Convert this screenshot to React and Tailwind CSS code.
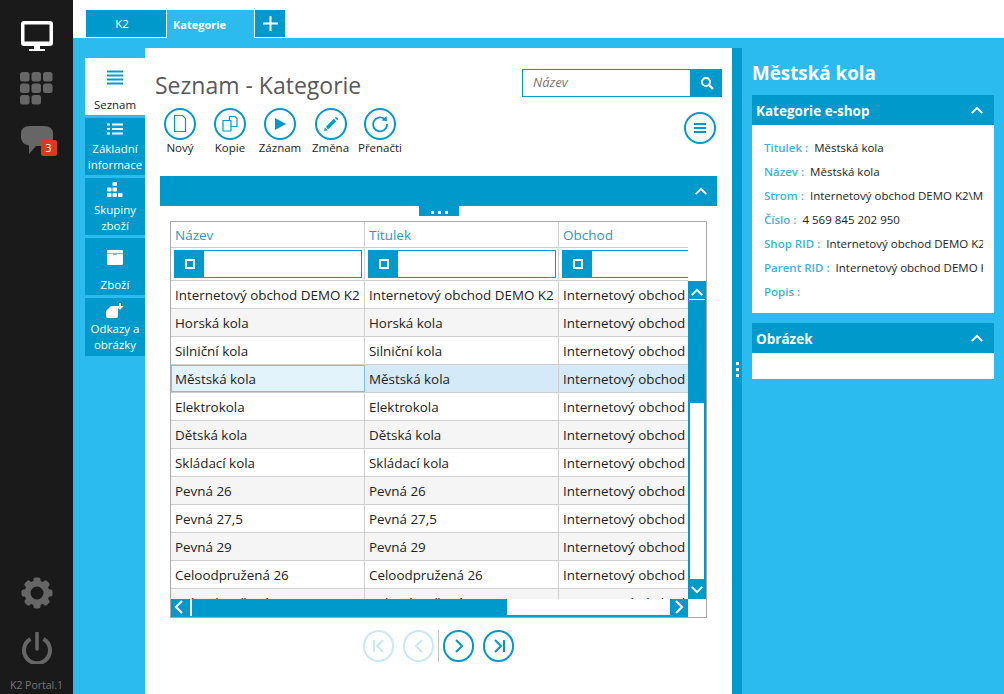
import React from 'react';

const rows = [
  'Internetový obchod DEMO K2',
  'Horská kola',
  'Silniční kola',
  'Městská kola',
  'Elektrokola',
  'Dětská kola',
  'Skládací kola',
  'Pevná 26',
  'Pevná 27,5',
  'Pevná 29',
  'Celoodpružená 26',
  'Celoodpružená 27,5',
];

const details = [
  ['Titulek', 'Městská kola'],
  ['Název', 'Městská kola'],
  ['Strom', 'Internetový obchod DEMO K2\\Městská kola'],
  ['Číslo', '4 569 845 202 950'],
  ['Shop RID', 'Internetový obchod DEMO K2'],
  ['Parent RID', 'Internetový obchod DEMO K2'],
  ['Popis', ''],
];

function Chevron({ dir = 'up', className = '' }) {
  const d = { up: 'M2 9 L8 3 L14 9', down: 'M2 3 L8 9 L14 3' }[dir];
  return (
    <svg width="14" height="11" viewBox="0 0 16 12" className={className}>
      <path d={d} fill="none" stroke="white" strokeWidth="2.4" />
    </svg>
  );
}

function Monitor() {
  return (
    <svg width="34" height="32" viewBox="0 0 34 32">
      <path fillRule="evenodd" fill="white" d="M4 1 H30 Q33 1 33 4 V23 Q33 26 30 26 H4 Q1 26 1 23 V4 Q1 1 4 1 Z M4.500 4.500 V21.500 H29.500 V4.500 Z" />
      <rect x="14" y="26" width="6" height="3" fill="white" />
      <rect x="9" y="29" width="16" height="2" fill="white" />
    </svg>
  );
}

function Apps() {
  const cells = [[0, 0], [11.500, 0], [23, 0], [0, 11.500], [11.500, 11.500], [23, 11.500], [0, 23], [11.500, 23]];
  return (
    <svg width="33" height="33" viewBox="0 0 33 33">
      {cells.map(([x, y]) => (
        <rect key={`${x}-${y}`} x={x} y={y} width="9.500" height="9.500" rx="2.500" fill="#666" />
      ))}
    </svg>
  );
}

function Chat() {
  return (
    <svg width="32" height="29" viewBox="0 0 32 29">
      <path fill="#666" d="M9 0 H23 Q32 0 32 8 V12 Q32 20 23 20 H15 L8 28 V19.500 Q0 18 0 11 V8 Q0 0 9 0 Z" />
    </svg>
  );
}

function Gear() {
  const teeth = [0, 45, 90, 135, 180, 225, 270, 315];
  return (
    <svg width="32" height="32" viewBox="0 0 32 32">
      {teeth.map((a) => (
        <rect key={a} x="12.500" y="0.500" width="7" height="8" rx="2" fill="#666" transform={`rotate(${a} 16 16)`} />
      ))}
      <circle cx="16" cy="16" r="9.500" fill="none" stroke="#666" strokeWidth="6" />
    </svg>
  );
}

function Power() {
  return (
    <svg width="32" height="32" viewBox="0 0 32 32">
      <path d="M9.500 7 A13 13 0 1 0 22.500 7" fill="none" stroke="#666" strokeWidth="4" />
      <path d="M16 1 V17" stroke="#666" strokeWidth="3.500" strokeLinecap="round" />
    </svg>
  );
}

const toolIcons = {
  new: <path d="M4.500 1.500 H12.500 L15.500 4.500 V17.500 H4.500 Z" fill="none" stroke="#0099cc" strokeWidth="1.200" />,
  copy: (
    <g fill="none" stroke="#0099cc" strokeWidth="1.200">
      <path d="M9.500 2.500 H15 L17 4.500 V12.500 H9.500 Z" />
      <path d="M3 6.500 H11 V17 H3 Z" fill="white" />
    </g>
  ),
  play: <path d="M5 4 L16 10 L5 16 Z" fill="#0099cc" />,
  edit: (
    <g>
      <path d="M6 14 L14 6" stroke="#0099cc" strokeWidth="3.200" />
      <path d="M15 5 L16.200 3.800" stroke="#0099cc" strokeWidth="3.200" />
      <path d="M3 17 L3.800 13.500 L6.500 16.200 Z" fill="#0099cc" />
    </g>
  ),
  reload: (
    <g>
      <path d="M14.500 5 A7 7 0 1 0 17 10" fill="none" stroke="#0099cc" strokeWidth="1.800" />
      <path d="M11.500 6.500 L17 7 L16.500 2 Z" fill="#0099cc" />
    </g>
  ),
};

function ToolButton({ icon, label, width }) {
  return (
    <div className="flex flex-col items-center" style={{ width }}>
      <div className="w-[32px] h-[32px] rounded-full border-2 border-[#0099cc] flex items-center justify-center">
        <svg width="20" height="20" viewBox="0 0 20 20">{toolIcons[icon]}</svg>
      </div>
      <div className="text-[11.500px] leading-[16px] text-[#222] whitespace-nowrap">{label}</div>
    </div>
  );
}

function PagerButton({ d, faded }) {
  return (
    <div className={`w-[31px] h-[32px] rounded-full border-2 flex items-center justify-center ${faded ? 'border-[#c9e9f4]' : 'border-[#0099cc]'}`}>
      <svg width="18" height="18" viewBox="0 0 18 18">
        <path d={d} fill="none" stroke={faded ? '#c9e9f4' : '#0099cc'} strokeWidth="2" />
      </svg>
    </div>
  );
}

function NavItem({ label, icon, active, iconClass }) {
  return (
    <div className={`flex flex-col items-center text-center text-[11.500px] leading-[16px] ${active ? 'bg-white text-[#222] h-[57px]' : 'bg-[#0099cc] text-white h-[57px]'}`}>
      <div className={`flex items-center justify-center shrink-0 ${iconClass}`}>{icon}</div>
      {label.map((line) => (
        <div key={line} className="whitespace-nowrap">{line}</div>
      ))}
    </div>
  );
}

function FilterCell({ width }) {
  return (
    <div className="h-[32px] flex items-center pl-[3px] pr-[2px] border-r border-[#d0d0d0]" style={{ width }}>
      <div className="h-[28px] w-full flex border border-[#0099cc] bg-white">
        <div className="w-[29px] h-full bg-[#0099cc] flex items-center justify-center">
          <div className="w-[10px] h-[10px] border-2 border-white" />
        </div>
      </div>
    </div>
  );
}

function PanelHeader({ title }) {
  return (
    <div className="h-[30px] bg-[#0099cc] flex items-center justify-between pl-[4px] pr-[10px] text-white font-bold text-[13.500px]">
      <span className="pt-[2px]">{title}</span>
      <Chevron />
    </div>
  );
}

export default function App() {
  return (
    <div className="w-[1004px] h-[694px] flex overflow-hidden bg-white text-[#222]" style={{ fontFamily: '"Open Sans", "Noto Sans", sans-serif' }}>
      {/* dark sidebar */}
      <div className="w-[73px] shrink-0 bg-[#1a1a1a] flex flex-col items-center">
        <div className="mt-[20px]"><Monitor /></div>
        <div className="mt-[20px]"><Apps /></div>
        <div className="mt-[21px] relative">
          <Chat />
          <div className="absolute left-[20px] top-[14px] w-[16px] h-[16px] rounded-[2px] bg-[#d9391c] text-white text-[11px] leading-[16px] text-center">3</div>
        </div>
        <div className="mt-auto"><Gear /></div>
        <div className="mt-[23px]"><Power /></div>
        <div className="mt-[14px] mb-[2px] text-[10.500px] leading-[14px] text-[#777] whitespace-nowrap">K2 Portal.1</div>
      </div>

      <div className="flex-1 flex flex-col min-w-0">
        {/* tabs */}
        <div className="h-[38px] shrink-0 flex pl-[13px] pt-[10px] gap-[1px] bg-white">
          <div className="w-[80px] h-[27px] bg-[#0099cc] text-white text-[11.500px] leading-[27px] text-center pr-[8px]">K2</div>
          <div className="w-[87px] h-[28px] bg-[#2bbbef] text-white font-bold text-[11px] leading-[30px] pl-[6px]">Kategorie</div>
          <div className="w-[30px] h-[27px] bg-[#0099cc] flex items-center justify-center">
            <svg width="15" height="15" viewBox="0 0 15 15">
              <path d="M7.500 0 V15 M0 7.500 H15" stroke="white" strokeWidth="2" />
            </svg>
          </div>
        </div>

        <div className="flex-1 flex bg-[#2bbbef] min-h-0">
          {/* section nav */}
          <div className="w-[72px] shrink-0 pl-[12px] pt-[20px] flex flex-col gap-[3px]">
            <NavItem active iconClass="mt-[12px] mb-[11px]" label={['Seznam']} icon={
              <svg width="16" height="16" viewBox="0 0 16 16"><path d="M0 1.500 H16 M0 5.500 H16 M0 9.500 H16 M0 13.500 H16" stroke="#0099cc" strokeWidth="2" /></svg>
            } />
            <NavItem iconClass="mt-[5px] mb-[6px]" label={['Základní', 'informace']} icon={
              <svg width="16" height="12" viewBox="0 0 16 12"><path d="M0 1.500 H3 M5 1.500 H16 M0 6 H3 M5 6 H16 M0 10.500 H3 M5 10.500 H16" stroke="white" strokeWidth="2" /></svg>
            } />
            <NavItem iconClass="mt-[4px] mb-[5px]" label={['Skupiny', 'zboží']} icon={
              <svg width="16" height="15" viewBox="0 0 16 15" fill="white"><rect x="5.500" y="0" width="4.500" height="4" rx="1" /><rect x="0" y="5.500" width="4.500" height="4" rx="1" /><rect x="5.500" y="5.500" width="4.500" height="4" rx="1" /><rect x="0" y="11" width="4.500" height="4" rx="1" /><rect x="5.500" y="11" width="4.500" height="4" rx="1" /><rect x="11" y="11" width="4.500" height="4" rx="1" /></svg>
            } />
            <div className="h-[57px] bg-[#0099cc] text-white text-[11.500px] leading-[16px] flex flex-col items-center">
              <svg width="16" height="15" viewBox="0 0 16 15" className="mt-[12px]" fill="white">
                <rect x="0" y="0" width="16" height="15" rx="1" />
                <path d="M0 3.500 H16" stroke="#66c2e0" strokeWidth="1" />
                <rect x="6" y="3" width="4" height="2" fill="#66c2e0" />
              </svg>
              <div className="mt-[12px]">Zboží</div>
            </div>
            <div className="h-[58px] bg-[#0099cc] text-white text-[11.500px] leading-[16px] flex flex-col items-center text-center">
              <svg width="18" height="16" viewBox="0 0 18 16" className="mt-[5px]" fill="white"><path d="M5 3 H11 Q12 3 12 5 V13 Q12 15 10 15 H2 Q0 15 0 13 V8 Z" /><path d="M13 0 H15 V3 H17.500 L14 7 L10.500 3 H13 Z" /></svg>
              <div className="mt-[2px]">Odkazy a</div>
              <div>obrázky</div>
            </div>
          </div>

          {/* main panel */}
          <div className="w-[587px] shrink-0 mt-[10px] bg-white flex flex-col pl-[10px] pr-[10px]">
            <div className="flex justify-between items-start pt-[21px] h-[60px] shrink-0">
              <div className="text-[23px] leading-[32px] text-[#58595b]">Seznam - Kategorie</div>
              <div className="flex w-[200px] h-[28px]">
                <div className="flex-1 border border-[#0099cc] pl-[10px] text-[13px] leading-[25px] italic text-[#777]">Název</div>
                <div className="w-[31px] bg-[#0099cc] flex items-center justify-center">
                  <svg width="14" height="14" viewBox="0 0 14 14"><circle cx="6" cy="6" r="4" fill="none" stroke="white" strokeWidth="2" /><path d="M9 9 L13 13" stroke="white" strokeWidth="2.400" /></svg>
                </div>
              </div>
            </div>

            <div className="flex items-start justify-between shrink-0 h-[68px] pr-[6px]">
              <div className="flex pl-[5px]">
                <ToolButton icon="new" label="Nový" width={40} />
                <ToolButton icon="copy" label="Kopie" width={60} />
                <ToolButton icon="play" label="Záznam" width={40} />
                <ToolButton icon="edit" label="Změna" width={61} />
                <ToolButton icon="reload" label="Přenačti" width={38} />
              </div>
              <div className="mt-[4px] w-[32px] h-[32px] rounded-full border-2 border-[#0099cc] flex items-center justify-center">
                <svg width="14" height="12" viewBox="0 0 14 12"><path d="M1 2 H13 M1 6 H13 M1 10 H13" stroke="#0099cc" strokeWidth="2" /></svg>
              </div>
            </div>

            <div className="ml-[5px] w-[557px] h-[30px] shrink-0 bg-[#0099cc] flex items-center justify-end pr-[9px]">
              <Chevron />
            </div>
            <div className="ml-[264px] w-[40px] h-[10px] shrink-0 bg-[#0099cc] flex items-center justify-center gap-[4px] pt-[2px]">
              <span className="w-[3px] h-[3px] bg-white" /><span className="w-[3px] h-[3px] bg-white" /><span className="w-[3px] h-[3px] bg-white" />
            </div>

            {/* grid */}
            <div className="mt-[5px] ml-[15px] w-[537px] h-[397px] shrink-0 border border-[#aaa] flex flex-col text-[13.400px] overflow-hidden">
              <div className="w-[517px] h-[26px] flex text-[#2d96c6] text-[13.500px] leading-[26px] border-b border-[#d0d0d0] shrink-0">
                <div className="w-[194px] pl-[4px] border-r border-[#d0d0d0]">Název</div>
                <div className="w-[194px] pl-[4px] border-r border-[#d0d0d0]">Titulek</div>
                <div className="w-[129px] pl-[4px]">Obchod</div>
              </div>
              <div className="w-[517px] flex border-b border-[#d0d0d0] shrink-0">
                <FilterCell width={194} />
                <FilterCell width={194} />
                <div className="w-[129px] h-[32px] flex items-center pl-[3px]">
                  <div className="h-[28px] w-full flex border border-r-0 border-[#0099cc]">
                    <div className="w-[29px] h-full bg-[#0099cc] flex items-center justify-center">
                      <div className="w-[10px] h-[10px] border-2 border-white" />
                    </div>
                  </div>
                </div>
              </div>

              <div className="flex-1 flex min-h-0">
                <div className="w-[517px] overflow-hidden">
                  {rows.map((name, i) => {
                    const selected = i === 3;
                    const bg = selected ? 'bg-[#d4eaf8]' : i % 2 === 1 ? 'bg-[#f5f5f5]' : 'bg-white';
                    return (
                      <div key={name} className={`h-[28px] flex leading-[29px] border-b border-[#d0d0d0] text-[#222] whitespace-nowrap ${bg}`}>
                        {selected ? (
                          <div className="w-[194px] pl-[3px] overflow-hidden bg-[#e3f3fc] border border-[#7ec0d8] leading-[27px]">{name}</div>
                        ) : (
                          <div className="w-[194px] pl-[4px] overflow-hidden border-r border-[#d0d0d0]">{name}</div>
                        )}
                        <div className="w-[194px] pl-[4px] overflow-hidden border-r border-[#d0d0d0]">{name}</div>
                        <div className="w-[129px] pl-[4px] overflow-hidden">Internetový obchod</div>
                      </div>
                    );
                  })}
                </div>
                <div className="w-[18px] flex flex-col border-x-2 border-[#0099cc]">
                  <div className="-mx-[2px] h-[122px] bg-[#0099cc] flex justify-center pt-[6px] shrink-0">
                    <div className="flex flex-col items-center">
                      <Chevron />
                      <div className="w-[16px] h-[1px] bg-white mt-[1px]" />
                    </div>
                  </div>
                  <div className="flex-1 bg-white" />
                  <div className="-mx-[2px] h-[20px] bg-[#0099cc] flex items-center justify-center shrink-0">
                    <Chevron dir="down" />
                  </div>
                </div>
              </div>

              <div className="h-[18px] shrink-0 flex">
                <div className="w-[517px] flex border-b-2 border-[#0099cc]">
                  <div className="w-[336px] bg-[#0099cc] flex items-center pl-[3px] gap-[6px]">
                    <svg width="10" height="14" viewBox="0 0 10 14"><path d="M8 1 L2 7 L8 13" fill="none" stroke="white" strokeWidth="2.200" /></svg>
                    <div className="w-[2px] h-[18px] bg-white" />
                  </div>
                  <div className="flex-1 bg-white" />
                  <div className="w-[18px] bg-[#0099cc] flex items-center justify-center">
                    <svg width="10" height="14" viewBox="0 0 10 14"><path d="M2 1 L8 7 L2 13" fill="none" stroke="white" strokeWidth="2.200" /></svg>
                  </div>
                </div>
              </div>
            </div>

            {/* pager */}
            <div className="mt-[12px] ml-[208px] flex items-center">
              <PagerButton faded d="M4 3 V15 M13 3 L7 9 L13 15" />
              <div className="w-[9px]" />
              <PagerButton faded d="M12 3 L6 9 L12 15" />
              <div className="w-[1px] h-[32px] bg-[#c0c0c0] ml-[4px] mr-[4px]" />
              <PagerButton d="M6 3 L12 9 L6 15" />
              <div className="w-[9px]" />
              <PagerButton d="M5 3 L11 9 L5 15 M14 3 V15" />
            </div>
          </div>

          {/* splitter */}
          <div className="w-[10px] shrink-0 bg-[#0099cc] mt-[10px] flex flex-col items-center justify-center gap-[3px] pb-[3px]">
            <span className="w-[3px] h-[3px] bg-white" /><span className="w-[3px] h-[3px] bg-white" /><span className="w-[3px] h-[3px] bg-white" />
          </div>

          {/* detail panel */}
          <div className="flex-1 px-[10px] pt-[21px] min-w-0">
            <div className="text-white font-bold text-[18.800px] leading-[28px]">Městská kola</div>
            <div className="mt-[8px]">
              <PanelHeader title="Kategorie e-shop" />
              <div className="bg-white h-[188px] pl-[12px] pr-[11px] pt-[11px] text-[11.500px]">
                {details.map(([label, value]) => (
                  <div key={label} className="h-[24px] leading-[24px] flex whitespace-nowrap overflow-hidden">
                    <span className="font-semibold text-[#3fb1e3] mr-[6px]">{label} :</span>
                    <span className="text-[#222]">{value}</span>
                  </div>
                ))}
              </div>
            </div>
            <div className="mt-[10px]">
              <PanelHeader title="Obrázek" />
              <div className="bg-white h-[26px]" />
            </div>
          </div>
        </div>
      </div>
    </div>
  );
}
